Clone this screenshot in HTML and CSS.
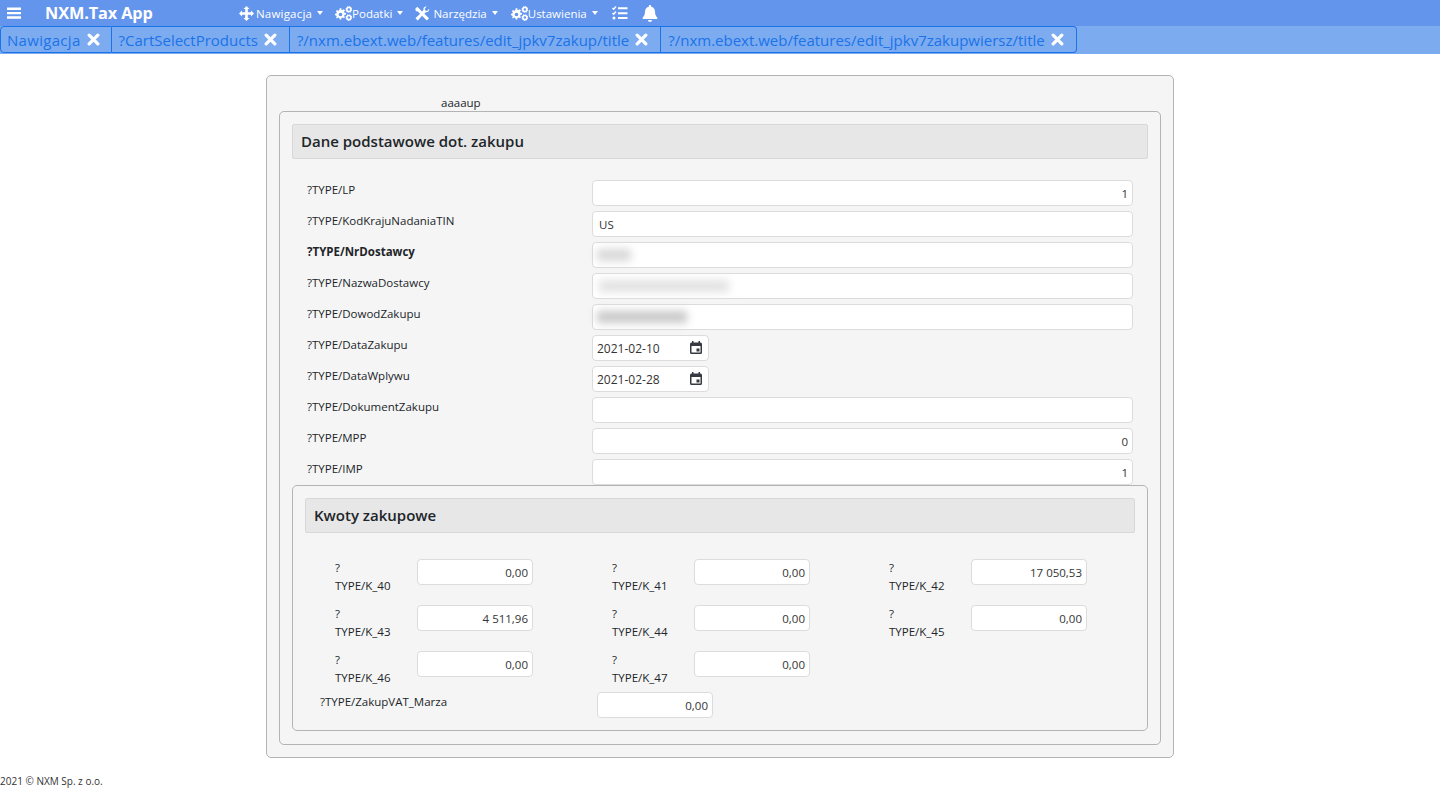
FILE: index.html
```html
<!DOCTYPE html>
<html lang="pl">
<head>
<meta charset="utf-8">
<title>NXM.Tax App</title>
<link rel="stylesheet" href="styles.css">
</head>
<body>
<svg class="defs" width="0" height="0" aria-hidden="true">
  <defs>
    <g id="gear"><path d="M5.200 0h1.800l.3 1.700 1.200.5 1.400-1 1.300 1.300-1 1.400.5 1.200 1.700.3v1.800l-1.700.3-.5 1.200 1 1.400-1.300 1.300-1.400-1-1.200.5-.3 1.700H5.200l-.3-1.700-1.200-.5-1.400 1L1 10.900l1-1.400-.5-1.200L-.2 8V6.200l1.700-.3.500-1.200-1-1.400L2.300 2l1.400 1 1.200-.5z" fill="#fff"/><circle cx="6.100" cy="7.100" r="2" fill="#6495ed"/></g>
    <g id="gear2"><circle cx="3.500" cy="3.500" r="2.300" fill="none" stroke="#fff" stroke-width="1.800"/><circle cx="3.500" cy="3.500" r="3.300" fill="none" stroke="#fff" stroke-width="1" stroke-dasharray="1.300 1.300"/></g>
  </defs>
</svg>
<nav class="navbar">
  <svg class="burger" viewBox="0 0 14 14" width="14" height="14"><path d="M0 1.500h14v2.400H0zM0 5.900h14v2.400H0zM0 10.300h14v2.400H0z" fill="#fff"/></svg>
  <span class="brand">NXM.Tax App</span>
  <a class="menu nav-move">
    <svg class="ico" viewBox="0 0 16 16" width="15" height="15"><path d="M8 0l3.200 3.200H9.400v3.400h3.400V4.800L16 8l-3.200 3.200V9.400H9.400v3.400h1.800L8 16l-3.200-3.200h1.800V9.400H3.200v1.800L0 8l3.200-3.200v1.800h3.400V3.200H4.800z" fill="#fff"/></svg>
    <span>Nawigacja</span><i class="caret"></i>
  </a>
  <a class="menu">
    <svg class="ico gears" viewBox="0 0 19 16" width="17" height="15"><use href="#gear" x="0" y="2"/><use href="#gear2" x="12" y="0"/><use href="#gear2" x="12" y="9"/></svg>
    <span>Podatki</span><i class="caret"></i>
  </a>
  <a class="menu nav-tools">
    <svg class="ico" viewBox="0 0 16 16" width="16" height="15"><path d="M.8 3L3 .8l5 5 1.600-1.600C9 2.300 10.500.3 13 .5l-2 2.200.5 2 2 .5L15.700 3c.3 2.500-1.700 4.200-3.700 3.700L10.500 8.200l5 4.800-2.300 2.500L8 10.500l-4.500 5L1 13l5-4.700-2.800-2.800H1.500z" fill="#fff"/></svg>
    <span>Narzędzia</span><i class="caret"></i>
  </a>
  <a class="menu nav-settings">
    <svg class="ico gears" viewBox="0 0 19 16" width="17" height="15"><use href="#gear" x="0" y="2"/><use href="#gear2" x="12" y="0"/><use href="#gear2" x="12" y="9"/></svg>
    <span>Ustawienia</span><i class="caret"></i>
  </a>
  <svg class="tasks" viewBox="0 0 16 16" width="17" height="16"><path d="M1 3l1.200 1.200L4.500 1.500M1 8l1.200 1.200L4.500 6.500" fill="none" stroke="#fff" stroke-width="1.400"/><circle cx="2.500" cy="13" r="1.500" fill="#fff"/><path d="M6.500 2.200H16v2H6.500zM6.500 7.200H16v2H6.500zM6.500 12H16v2H6.500z" fill="#fff"/></svg>
  <svg class="bell" viewBox="0 0 16 17" width="16" height="17"><path d="M8 0c.7 0 1.200.5 1.200 1.200v.6C11.500 2.300 13 4.200 13 6.500c0 3.500 1 4.800 2.300 6V14H.7v-1.500C2 11.300 3 10 3 6.500c0-2.300 1.500-4.200 3.800-4.700v-.6C6.800.5 7.300 0 8 0zM6 15h4a2 2 0 0 1-4 0z" fill="#fff"/></svg>
</nav>
<div class="tabs">
  <div class="tab"><span>Nawigacja</span><svg class="close" viewBox="0 0 12 12" width="13" height="13"><path d="M2 2l8 8M10 2l-8 8" stroke="#fff" stroke-width="3" stroke-linecap="round"/></svg></div>
  <div class="tab"><span>?CartSelectProducts</span><svg class="close" viewBox="0 0 12 12" width="13" height="13"><path d="M2 2l8 8M10 2l-8 8" stroke="#fff" stroke-width="3" stroke-linecap="round"/></svg></div>
  <div class="tab"><span>?/nxm.ebext.web/features/edit_jpkv7zakup/title</span><svg class="close" viewBox="0 0 12 12" width="13" height="13"><path d="M2 2l8 8M10 2l-8 8" stroke="#fff" stroke-width="3" stroke-linecap="round"/></svg></div>
  <div class="tab"><span>?/nxm.ebext.web/features/edit_jpkv7zakupwiersz/title</span><svg class="close" viewBox="0 0 12 12" width="13" height="13"><path d="M2 2l8 8M10 2l-8 8" stroke="#fff" stroke-width="3" stroke-linecap="round"/></svg></div>
</div>
<main class="panel">
  <div class="caption">aaaaup</div>
  <section class="box">
    <h2 class="legend">Dane podstawowe dot. zakupu</h2>
    <div class="rows">
      <div class="row"><label>?TYPE/LP</label><input class="num" value="1"></div>
      <div class="row"><label>?TYPE/KodKrajuNadaniaTIN</label><input value="US"></div>
      <div class="row"><label class="req">?TYPE/NrDostawcy</label><div class="masked"><input><span class="smear s1"></span></div></div>
      <div class="row"><label>?TYPE/NazwaDostawcy</label><div class="masked"><input><span class="smear s2"></span></div></div>
      <div class="row"><label>?TYPE/DowodZakupu</label><div class="masked"><input><span class="smear s3"></span></div></div>
      <div class="row"><label>?TYPE/DataZakupu</label><div class="datefield"><input value="2021-02-10"><svg class="cal" viewBox="0 0 12 13" width="12" height="13"><path d="M2 0h1.500v1.500h5V0H10v1.500h.5A1.500 1.500 0 0 1 12 3v8.500a1.500 1.500 0 0 1-1.500 1.500h-9A1.500 1.500 0 0 1 0 11.500V3a1.500 1.500 0 0 1 1.500-1.500H2zM1.500 5v6.500h9V5zM6.500 7.500h3v3h-3z" fill="#343a40" fill-rule="evenodd"/></svg></div></div>
      <div class="row"><label>?TYPE/DataWplywu</label><div class="datefield"><input value="2021-02-28"><svg class="cal" viewBox="0 0 12 13" width="12" height="13"><path d="M2 0h1.500v1.500h5V0H10v1.500h.5A1.500 1.500 0 0 1 12 3v8.500a1.500 1.500 0 0 1-1.500 1.500h-9A1.500 1.500 0 0 1 0 11.500V3a1.500 1.500 0 0 1 1.500-1.500H2zM1.500 5v6.500h9V5zM6.500 7.500h3v3h-3z" fill="#343a40" fill-rule="evenodd"/></svg></div></div>
      <div class="row"><label>?TYPE/DokumentZakupu</label><input></div>
      <div class="row"><label>?TYPE/MPP</label><input class="num" value="0"></div>
      <div class="row"><label>?TYPE/IMP</label><input class="num" value="1"></div>
    </div>
    <section class="box nested">
      <h2 class="legend">Kwoty zakupowe</h2>
      <div class="grid">
        <div class="cell"><label>?<br>TYPE/K_40</label><input class="num" value="0,00"></div>
        <div class="cell"><label>?<br>TYPE/K_41</label><input class="num" value="0,00"></div>
        <div class="cell"><label>?<br>TYPE/K_42</label><input class="num" value="17 050,53"></div>
        <div class="cell"><label>?<br>TYPE/K_43</label><input class="num" value="4 511,96"></div>
        <div class="cell"><label>?<br>TYPE/K_44</label><input class="num" value="0,00"></div>
        <div class="cell"><label>?<br>TYPE/K_45</label><input class="num" value="0,00"></div>
        <div class="cell"><label>?<br>TYPE/K_46</label><input class="num" value="0,00"></div>
        <div class="cell"><label>?<br>TYPE/K_47</label><input class="num" value="0,00"></div>
      </div>
      <div class="marza"><label>?TYPE/ZakupVAT_Marza</label><input class="num" value="0,00"></div>
    </section>
  </section>
</main>
<footer class="foot">2021 © NXM Sp. z o.o.</footer>
</body>
</html>
```
FILE: styles.css
```css
* { box-sizing: border-box; }
html, body { margin: 0; padding: 0; }
body { background: #fff; color: #212529; font-family: "Open Sans", "Noto Sans", sans-serif; font-size: 11.5px; height: 789px; overflow: hidden; }
.defs { position: absolute; }
.navbar { height: 26px; background: #6495ed; display: flex; align-items: center; color: #fff; padding-left: 7px; }
.burger { flex: none; }
.brand { font-size: 16.300px; font-weight: 700; margin-left: 24px; width: 194px; letter-spacing: -.1px; }
.menu { display: flex; align-items: center; color: #fff; font-size: 11.5px; margin-right: 11px; }
.nav-move { margin-right: 12px; }
.nav-move span { letter-spacing: .2px; }
.nav-tools { margin-right: 13px; }
.nav-tools .ico { margin-right: 3px; }
.nav-settings { margin-right: 13px; }
.ico { margin-right: 2px; flex: none; }
.gears { margin-right: 0; }
.caret { width: 0; height: 0; border-left: 3.500px solid transparent; border-right: 3.500px solid transparent; border-top: 4px solid #fff; margin-left: 5px; }
.bell { margin-left: 14px; }
.tabs { height: 28px; background: #7dabf0; display: flex; }
.tab { height: 27px; display: flex; align-items: center; padding: 0 12px 0 7px; border: 1px solid #1a73e8; border-left-width: 0; color: #1a73e8; font-size: 15px; }
.tab:first-child { border-left-width: 1px; border-radius: 4px 0 0 4px; padding: 0 11px 0 6px; letter-spacing: .3px; }
.tab:last-child { border-radius: 0 4px 4px 0; }
.close { margin-left: 6px; flex: none; }
.panel { width: 908px; height: 683px; margin: 21px 0 0 266px; background: #f5f5f5; border: 1px solid #b4b4b4; border-radius: 5px; padding: 20px 12px 12px; }
.caption { padding-left: 162px; height: 15px; line-height: 14px; color: #212529; }
.box { border: 1px solid #b4b4b4; border-radius: 5px; padding: 12px; background: #f5f5f5; }
.panel > .box { height: 634px; }
.legend { margin: 0; height: 35px; line-height: 32px; padding-left: 8px; background: #e7e7e7; border: 1px solid #d8d8d8; border-radius: 2px; font-size: 15px; font-weight: 600; color: #212529; }
.rows { padding: 21px 15px 0; }
.row { display: flex; height: 26px; margin-bottom: 5px; }
.row:last-child { margin-bottom: 0; }
.row label { width: 285px; flex: none; padding-top: 2px; line-height: 16px; }
.row label.req { font-weight: 700; }
.row > input, .masked { width: 541px; }
input { display: block; height: 26px; border: 1px solid #dcdcdc; border-radius: 4px; background: #fff; padding: 0 4px 0 6px; font-family: "Open Sans", "Noto Sans", sans-serif; font-size: 11.5px; color: #333; outline: 0; }
input.num { text-align: right; }
.masked, .datefield { position: relative; }
.masked input { width: 100%; }
.datefield { width: 117px; }
.datefield input { width: 100%; padding-left: 4px; font-size: 12px; }
.cal { position: absolute; left: 98px; top: 6px; }
.smear { position: absolute; left: 5px; top: 7px; height: 12px; background: #d8d8d8; filter: blur(4px); }
.s1 { width: 34px; }
.s2 { left: 7px; width: 130px; background: #e2e2e2; }
.s3 { width: 90px; background: #c8c8c8; }
.nested { height: 246px; }
.grid { display: grid; grid-template-columns: repeat(3, 277px); row-gap: 5px; padding: 26px 0 0 30px; }
.cell { display: flex; height: 41px; }
.cell label { width: 82px; flex: none; line-height: 18.400px; }
.cell input { width: 116px; }
.marza { display: flex; padding-left: 15px; }
.marza label { width: 277px; flex: none; line-height: 20px; }
.marza input { width: 116px; }
.foot { font-size: 10px; margin-top: 17px; line-height: 13px; color: #333; }
```
